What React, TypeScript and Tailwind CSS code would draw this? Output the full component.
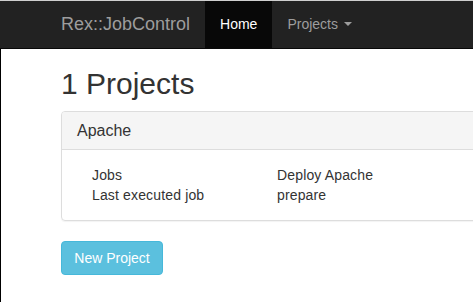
export default function App() {
  return (
    <div className="w-[473px] h-[302px] overflow-hidden bg-white font-['Liberation_Sans',Arial,sans-serif] text-[14px] leading-[20px] text-[#333]">
      <div className="border-t border-[#cfcfcf]">
        <nav className="h-[48px] bg-[#222] border-b border-[#080808] flex pl-[61px]">
          <div className="flex items-center pb-[2px] pr-[15px] text-[18px] text-[#9d9d9d]">Rex::JobControl</div>
          <div className="flex items-center pb-[2px] px-[15px] bg-[#080808] text-white">Home</div>
          <div className="flex items-center pb-[2px] px-[15px] text-[#9d9d9d]">
            Projects
            <span className="ml-[6px] w-0 h-0 border-t-[4px] border-t-[#9d9d9d] border-x-[4px] border-x-transparent" />
          </div>
        </nav>
      </div>
      <div className="border-l border-black h-[260px] pl-[60px] pt-[18px]">
        <h1 className="text-[30px] leading-[33px] font-normal">1 Projects</h1>
        <div className="mt-[11px] w-[700px] border border-[#ddd] rounded-[4px] shadow-[0_1px_1px_rgba(0,0,0,0.05)]">
          <div className="bg-[#f5f5f5] border-b border-[#ddd] px-[15px] py-[10px] text-[16px] leading-[17px] rounded-t-[3px]">Apache</div>
          <div className="p-[15px]">
            <div className="pl-[15px] tracking-[0.15px]">
              <div className="flex">
                <div className="w-[185px]">Jobs</div>
                <div>Deploy Apache</div>
              </div>
              <div className="flex">
                <div className="w-[185px]">Last executed job</div>
                <div>prepare</div>
              </div>
            </div>
          </div>
        </div>
        <button className="mt-[20px] w-[102px] bg-[#5bc0de] border border-[#46b8da] text-white rounded-[4px] py-[6px] text-[14px] leading-[20px] text-center">New Project</button>
      </div>
    </div>
  );
}
